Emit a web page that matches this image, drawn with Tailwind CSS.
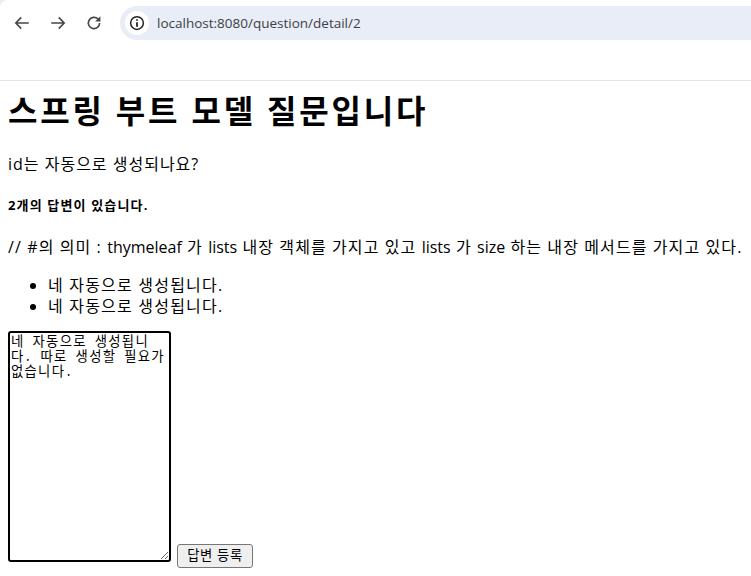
<!DOCTYPE html>
<html lang="ko">
  <head>
    <meta charset="UTF-8" />
    <script src="https://cdn.jsdelivr.net/npm/@tailwindcss/browser@4"></script>
    <title>question detail</title>
  </head>
  <body class="relative h-[576px] overflow-hidden bg-white text-black font-['Open_Sans','Noto_Sans_CJK_KR',sans-serif]">
    <!-- tab corner -->
    <svg class="absolute left-0 top-0 w-[8px] h-[8px]" viewBox="0 0 8 8"><path d="M0 0h8C3.5 0 0 3.5 0 8z" fill="#e9edf7" /></svg>
    <!-- browser toolbar -->
    <header class="h-[81px] border-b border-[#e3e3e3]">
      <div class="flex items-center h-[46px]">
        <div class="flex items-center w-[120px] pl-[13px] gap-[18px] text-[#474747]">
          <svg class="w-[18px] h-[18px]" viewBox="0 0 24 24" fill="none" stroke="currentColor" stroke-width="2.2">
            <path d="M21 12H4M11 4.5 3.8 12l7.2 7.5" />
          </svg>
          <svg class="w-[18px] h-[18px]" viewBox="0 0 24 24" fill="none" stroke="currentColor" stroke-width="2.2">
            <path d="M3 12h17M13 4.5l7.2 7.5-7.2 7.5" />
          </svg>
          <svg class="w-[18px] h-[18px]" viewBox="0 0 24 24" fill="none" stroke="currentColor" stroke-width="2.2">
            <path d="M19.5 12a7.5 7.5 0 1 1-2.3-5.4L20 9" />
            <path d="M20.5 3v7h-7" stroke="none" fill="currentColor" />
          </svg>
        </div>
        <div class="flex-1 flex items-center h-[34px] rounded-l-[17px] bg-[#e9edf7] pl-[5px] gap-[8px]">
          <div class="flex items-center justify-center w-[24px] h-[24px] rounded-full bg-white">
            <svg class="w-[18px] h-[18px]" viewBox="0 0 24 24" fill="none" stroke="#222" stroke-width="2">
              <circle cx="12" cy="12" r="8.5" />
              <path d="M12 11v6M12 7v2" stroke-width="2.4" />
            </svg>
          </div>
          <span class="text-[13.5px] text-[#3c3f43] font-['Open_Sans',sans-serif]">localhost:8080/question/detail/2</span>
        </div>
      </div>
    </header>

    <main class="px-2">
      <h1 class="mt-[9px] text-[32px] leading-[42px] font-bold tracking-[2.8px]">스프링 부트 모델 질문입니다</h1>
      <div class="mt-[20px] text-[16px] leading-[24px] tracking-[1px]">id는 자동으로 생성되나요?</div>
      <h5 class="mt-[19px] text-[13px] leading-[20px] font-bold tracking-[1.15px]">2개의 답변이 있습니다.</h5>
      <p class="mt-[20px] text-[16px] leading-[24px] whitespace-nowrap tracking-[1.1px]">// #의 의미 : <span class="tracking-normal">thymeleaf</span> 가 <span class="tracking-normal">lists</span> 내장 객체를 가지고 있고 <span class="tracking-normal">lists</span> 가 <span class="tracking-normal">size</span> 하는 내장 메서드를 가지고 있다.</p>
      <ul class="mt-[16px] pl-[40px] list-disc text-[16px] leading-[21px] tracking-[1.2px]">
        <li>네 자동으로 생성됩니다.</li>
        <li>네 자동으로 생성됩니다.</li>
      </ul>
      <form class="mt-[14px] flex items-end gap-[6px]">
        <textarea class="block w-[163px] h-[231px] border-2 border-black rounded-[3px] px-[1px] py-0 text-[13.33px] leading-[15px] tracking-[1.3px] font-['Noto_Sans_Mono_CJK_KR','DejaVu_Sans_Mono','Noto_Sans_CJK_KR',monospace] outline-none">네 자동으로 생성됩니다. 따로 생성할 필요가 없습니다.</textarea>
        <button type="button" class="mb-[-6px] w-[76px] h-[24px] bg-[#efefef] border border-[#767676] rounded-[3px] text-[13.33px] leading-none tracking-[0.6px]">답변 등록</button>
      </form>
    </main>
  </body>
</html>
